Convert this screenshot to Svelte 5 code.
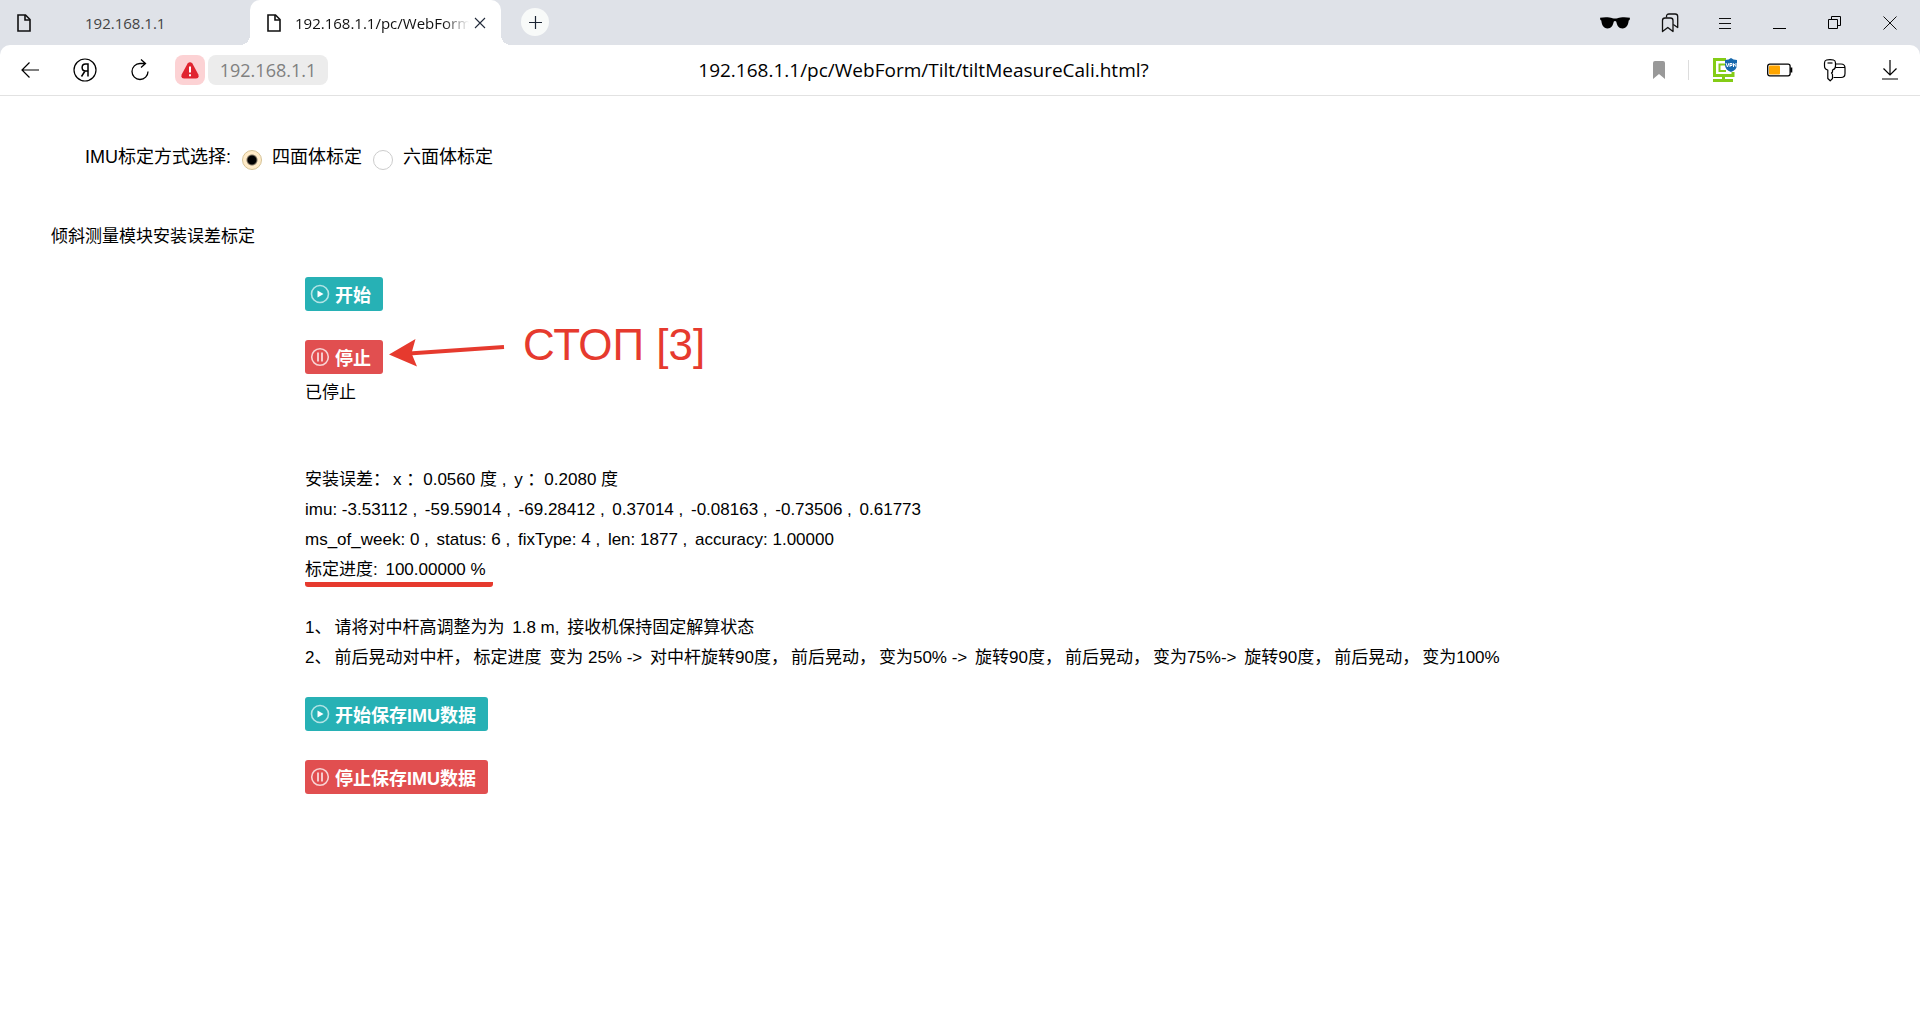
<script lang="ts">
    let tiltMode = $state('four');
    let status = $state('已停止');

    const address = '192.168.1.1';
    const path = '192.168.1.1/pc/WebForm/Tilt/tiltMeasureCali.html?';

    const installError = ['安装误差：', 'x ：0.0560 度 , ', 'y ：0.2080 度'];
    const imu = ['imu: -3.53112 , ', '-59.59014 , ', '-69.28412 , ', '0.37014 , ', '-0.08163 , ', '-0.73506 , ', '0.61773'];
    const solution = ['ms_of_week: 0 , ', 'status: 6 , ', 'fixType: 4 , ', 'len: 1877 , ', 'accuracy: 1.00000'];
    const progress = ['标定进度: ', '100.00000 %'];

    const steps = [
        ['1、', '请将对中杆高调整为为 ', '1.8 m, ', '接收机保持固定解算状态'],
        ['2、', '前后晃动对中杆，', '标定进度 ', '变为 25% -> ', '对中杆旋转90度，', '前后晃动，', '变为50% -> ', '旋转90度，', '前后晃动，', '变为75%-> ', '旋转90度，', '前后晃动，', '变为100%']
    ];
</script>

{#snippet pageIcon()}
    <svg class="page-icon" width="14" height="18" viewBox="0 0 14 18">
        <path d="M1 1H8.5L13 5.5V17H1Z" fill="none" stroke="currentColor" stroke-width="1.6" />
        <path d="M8 1V6H13" fill="none" stroke="currentColor" stroke-width="1.6" />
    </svg>
{/snippet}

{#snippet playIcon()}
    <svg width="20" height="20" viewBox="0 0 20 20">
        <circle cx="10" cy="10" r="8.5" fill="none" stroke="#fff" stroke-opacity="0.65" stroke-width="1.6" />
        <path d="M7.5 6.5L13.5 10L7.5 13.5Z" fill="#fff" />
    </svg>
{/snippet}

{#snippet pauseIcon()}
    <svg width="20" height="20" viewBox="0 0 20 20">
        <circle cx="10" cy="10" r="8.3" fill="none" stroke="#fff" stroke-opacity="0.75" stroke-width="1.6" />
        <path d="M8 5.5V14.5M12 5.5V14.5" stroke="#fff" stroke-opacity="0.7" stroke-width="2" />
    </svg>
{/snippet}

{#snippet reading(parts)}
    {#each parts as part}<span class="part">{part}</span>{/each}
{/snippet}

<header>
    <div class="tab-bar">
        <div class="tab">
            {@render pageIcon()}
            <span class="tab-title centered">{address}</span>
        </div>
        <div class="tab active">
            {@render pageIcon()}
            <span class="tab-title clipped">{path}</span>
            <button class="tab-close" aria-label="Close tab">
                <svg width="12" height="12" viewBox="0 0 12 12"><path d="M1 1L11 11M11 1L1 11" stroke="#222b3a" stroke-width="1.1" /></svg>
            </button>
        </div>
        <button class="new-tab" aria-label="New tab">
            <svg width="13" height="13" viewBox="0 0 13 13"><path d="M6.5 0V13M0 6.5H13" stroke="#1b2433" stroke-width="1.2" /></svg>
        </button>
        <div class="window-controls">
            <button class="tool" aria-label="Incognito">
                <svg width="30" height="12" viewBox="0 0 30 12">
                    <path d="M0 0.8C4 -0.1 9 -0.1 12.5 1.2C14 1.7 16 1.7 17.5 1.2C21 -0.1 26 -0.1 30 0.8L29.6 3L28.7 3.6C28.3 8 26.5 11.5 22.5 11.5C18.6 11.5 17 8.5 16.3 4.8C15.8 3.8 14.2 3.8 13.7 4.8C13 8.5 11.4 11.5 7.5 11.5C3.5 11.5 1.7 8 1.3 3.6L0.4 3Z" fill="#000" />
                </svg>
            </button>
            <button class="tool" aria-label="Bookmarks">
                <svg width="18" height="20" viewBox="0 0 18 20" fill="none" stroke="#111" stroke-width="1.3" stroke-linejoin="round">
                    <path d="M1.5 18.5V7.5Q1.5 5 4 5H9.5Q12 5 12 7.5V18.5L6.8 14.5Z" />
                    <path d="M5.5 4.5V3.5Q5.5 1 8 1H14.2Q16.7 1 16.7 3.5V14.5L12.3 11.5" />
                </svg>
            </button>
            <button class="tool" aria-label="Menu">
                <svg width="12" height="12" viewBox="0 0 12 12"><path d="M0 1H12M0 6H12M0 11H12" stroke="#111" stroke-width="1" shape-rendering="crispEdges" /></svg>
            </button>
            <button class="tool" aria-label="Minimize">
                <svg width="13" height="13" viewBox="0 0 13 13"><path d="M0 12.5H13" stroke="#000" stroke-width="1" /></svg>
            </button>
            <button class="tool" aria-label="Restore">
                <svg width="13" height="13" viewBox="0 0 13 13" fill="none" stroke="#000"><path d="M0.5 3.5H9.5V12.5H0.5ZM3.5 3.5V0.5H12.5V9.5H9.5" /></svg>
            </button>
            <button class="tool" aria-label="Close">
                <svg width="14" height="14" viewBox="0 0 14 14"><path d="M0.5 0.5L13.5 13.5M13.5 0.5L0.5 13.5" stroke="#111" /></svg>
            </button>
        </div>
    </div>

    <div class="toolbar-back">
        <nav class="toolbar">
            <button class="tool" aria-label="Back">
                <svg width="18" height="16" viewBox="0 0 18 16" fill="none" stroke="#000" stroke-width="1.2"><path d="M8.5 0.5L1 8L8.5 15.5M1 8H18" /></svg>
            </button>
            <button class="tool" aria-label="Yandex">
                <svg width="24" height="24" viewBox="0 0 24 24" fill="none" stroke="#000" stroke-width="1.2">
                    <circle cx="12" cy="12" r="11" />
                    <path d="M15 18.5V6H12.5C8 6 8 13 12.5 13H15M12 13L8.5 18.5" stroke-width="1.5" />
                </svg>
            </button>
            <button class="tool" aria-label="Reload">
                <svg width="18" height="22" viewBox="0 0 18 22" fill="none" stroke="#000" stroke-width="1.3"><path d="M17 12.5A8 8 0 1 1 9 4.5H14.5M10 0.5L14.5 4.5L10 8.5" /></svg>
            </button>
            <button class="warning" aria-label="Not secure">
                <svg width="18" height="17" viewBox="0 0 18 17">
                    <path d="M6.6 1.6Q9 -1.2 11.4 1.6L17.2 12.2Q18.6 16.2 15 16.6H3Q-0.6 16.2 0.8 12.2Z" fill="#e0242f" />
                    <path d="M9 4.6V10.4M9 12.2V14.2" stroke="#fff" stroke-width="2" />
                </svg>
            </button>
            <a class="host" href="#top">{address}</a>
            <div class="page-path">{path}</div>
            <button class="tool" aria-label="Add bookmark">
                <svg width="12" height="18" viewBox="0 0 12 18"><path d="M0 2Q0 0 2 0H10Q12 0 12 2V18L6 13L0 18Z" fill="#999" /></svg>
            </button>
            <span class="divider"></span>
            <button class="tool" aria-label="VPN">
                <svg width="26" height="26" viewBox="0 0 26 26">
                    <g fill="none" stroke="#84cc16" stroke-width="3">
                        <path d="M14 2.5H2.5V18.5H21V15" />
                        <path d="M13 7.5H7.5V14H14" stroke-width="2" />
                        <path d="M11.5 19V23M1 23.5H21" />
                    </g>
                    <path d="M13 3Q17 3 19 1Q21 3 25 3V8Q25 13 19 15Q13 13 13 8Z" fill="#1668ad" />
                    <path d="M14 6L15.5 10L17 6M18 10V6.5H20V8.5H18M21.5 10V6.5L24 9.5V6" fill="none" stroke="#fff" stroke-width="1" />
                </svg>
            </button>
            <button class="tool" aria-label="Battery">
                <svg width="26" height="14" viewBox="0 0 26 14">
                    <rect x="0.7" y="1.2" width="22.4" height="11.6" rx="2" fill="#fff" stroke="#000" stroke-width="1.3" />
                    <rect x="2" y="2.5" width="11" height="9" rx="1" fill="#ffa600" />
                    <path d="M24.3 4.5V9.5" stroke="#000" stroke-width="2" />
                </svg>
            </button>
            <button class="tool" aria-label="Passwords">
                <svg width="24" height="23" viewBox="0 0 24 23" fill="none" stroke="#000" stroke-width="1.2" stroke-linejoin="round">
                    <path d="M12.5 5H18Q22 5 22 9V14.5Q22 18.5 18 18.5H10.5M12.5 8.5H22" />
                    <path d="M3.5 1Q7 0.2 10.5 1Q12.5 1.5 12.5 4V7Q12.5 10.2 9.5 11V13L8.5 14L9.5 15.5V19.5L7.2 21.8L4.8 19.5V11Q1.5 10.2 1.5 7V4Q1.5 1.5 3.5 1Z" fill="#fff" />
                    <path d="M4.5 4H9.5" />
                </svg>
            </button>
            <button class="tool" aria-label="Downloads">
                <svg width="16" height="20" viewBox="0 0 16 20" fill="none" stroke="#000" stroke-width="1.2"><path d="M8 0V15M1.5 8.5L8 15L14.5 8.5M0 19H16" /></svg>
            </button>
        </nav>
    </div>
</header>

<main id="top">
    <fieldset class="mode">
        <legend>IMU标定方式选择:</legend>
        <label><input type="radio" name="tilt" value="four" bind:group={tiltMode} />四面体标定</label>
        <label><input type="radio" name="tilt" value="six" bind:group={tiltMode} />六面体标定</label>
    </fieldset>

    <h1>倾斜测量模块安装误差标定</h1>

    <section class="calibration">
        <button class="action start" onclick={() => (status = '标定中')}>{@render playIcon()}开始</button>

        <div class="stop-row">
            <button class="action stop" onclick={() => (status = '已停止')}>{@render pauseIcon()}停止</button>
            <div class="callout">
                <svg width="116" height="28" viewBox="0 0 116 28">
                    <path d="M20 14.5L115 8" stroke="#e63a2e" stroke-width="4" />
                    <path d="M0 15.5L26.5 0L22.5 14.3L28 27.5Z" fill="#e63a2e" />
                </svg>
                <span>СТОП [3]</span>
            </div>
        </div>
        <p class="status">{status}</p>

        <div class="readings">
            <p>{@render reading(installError)}</p>
            <p>{@render reading(imu)}</p>
            <p>{@render reading(solution)}</p>
            <p><span class="progress">{@render reading(progress)}</span></p>
        </div>

        <div class="steps">
            {#each steps as step}
                <p>{@render reading(step)}</p>
            {/each}
        </div>

        <button class="action start">{@render playIcon()}开始保存IMU数据</button>
        <button class="action stop">{@render pauseIcon()}停止保存IMU数据</button>
    </section>
</main>

<style>
    :global(body) {
        margin: 0;
        background: #fff;
        color: #000;
        font-family: "Liberation Sans", "Noto Sans CJK SC", sans-serif;
    }

    button {
        border: none;
        background: none;
        padding: 0;
        font-family: inherit;
        cursor: pointer;
    }

    header {
        font-family: "Open Sans", "Noto Sans", sans-serif;
    }

    .tab-bar {
        display: flex;
        height: 45px;
        background: #dfe2e8;
    }

    .tab {
        display: flex;
        align-items: center;
        box-sizing: border-box;
        width: 250px;
        padding: 0 17px;
        color: #444;
        font-size: 15px;
    }

        .tab.active {
            position: relative;
            width: 251px;
            padding: 0 15px 0 17px;
            border-radius: 10px 10px 0 0;
            background: #fff;
            color: #111;
        }

        /* outward curves where the active tab meets the toolbar */
        .tab.active::before,
        .tab.active::after {
            content: '';
            position: absolute;
            bottom: 0;
            width: 10px;
            height: 10px;
        }

        .tab.active::before {
            left: -10px;
            background: radial-gradient(circle at 0 0, transparent 10px, #fff 10px);
        }

        .tab.active::after {
            right: -10px;
            background: radial-gradient(circle at 100% 0, transparent 10px, #fff 10px);
        }

    .page-icon {
        flex: none;
        color: #111;
    }

    .tab-title {
        flex: 1;
        white-space: nowrap;
    }

    .centered {
        padding-left: 54px;
    }

    .clipped {
        margin: 0 5px 0 14px;
        overflow: hidden;
        mask-image: linear-gradient(to right, #000 85%, transparent);
    }

    .tab-close {
        display: flex;
    }

    .new-tab {
        display: flex;
        align-items: center;
        justify-content: center;
        width: 28px;
        height: 28px;
        margin: 8px 0 0 20px;
        border-radius: 50%;
        background: #f8faf9;
    }

    .window-controls {
        display: flex;
        margin-left: auto;
        padding-right: 3px;
    }

    .tool {
        display: flex;
        align-items: center;
        justify-content: center;
        flex: none;
        width: 55px;
    }

    .toolbar-back {
        background: #dfe2e8;
    }

    .toolbar {
        display: flex;
        align-items: center;
        height: 50px;
        padding: 0 3px 0 2px;
        border-bottom: 1px solid #e2e2e2;
        border-radius: 10px 10px 0 0;
        background: #fff;
    }

    .warning {
        display: flex;
        align-items: center;
        justify-content: center;
        width: 30px;
        height: 30px;
        margin: 0 3px 0 8px;
        border-radius: 8px;
        background: #fcd2d4;
    }

    .host {
        box-sizing: border-box;
        width: 120px;
        border-radius: 8px;
        background: #ececec;
        color: #808080;
        font-size: 18px;
        line-height: 30px;
        text-align: center;
        text-decoration: none;
    }

    .page-path {
        flex: 1;
        padding-right: 112px;
        font-size: 19px;
        text-align: center;
    }

    .divider {
        width: 1px;
        height: 20px;
        margin: 0 8px 0 2px;
        background: #ddd;
    }

    main {
        padding: 43px 51px;
        font-size: 17px;
    }

    .mode {
        display: flex;
        align-items: center;
        gap: 11px;
        margin: 0;
        padding: 0 34px;
        border: none;
        font-size: 18px;
        line-height: 36px;
    }

        .mode legend {
            float: left;
            padding: 0;
        }

        .mode label {
            display: flex;
            align-items: center;
            gap: 10px;
        }

        .mode input {
            appearance: none;
            box-sizing: border-box;
            width: 20px;
            height: 20px;
            margin: 6px 0 0;
            border: 1px solid #ccc;
            border-radius: 50%;
            background: #fff;
        }

        .mode input:checked {
            border-color: #d5c295;
            background: radial-gradient(circle, #000 4px, #ffebc8 6px);
        }

    h1 {
        margin: 47px 0 25px;
        font-size: 17px;
        font-weight: normal;
        line-height: 30px;
    }

    .calibration {
        display: flex;
        flex-direction: column;
        align-items: flex-start;
        padding-left: 254px;
    }

    .action {
        display: flex;
        align-items: center;
        gap: 5px;
        height: 34px;
        padding: 0 12px 0 5px;
        border-radius: 3px;
        color: #fff;
        font-size: 18px;
        font-weight: bold;
    }

    .start {
        margin-bottom: 29px;
        background: #27b1b5;
    }

    .stop {
        background: #e14f50;
    }

    .stop-row {
        position: relative;
    }

    .callout {
        position: absolute;
        top: -20px;
        left: 84px;
        display: flex;
        align-items: center;
        gap: 18px;
        color: #e63a2e;
        font-size: 44px;
        line-height: 50px;
        white-space: nowrap;
    }

        .callout svg {
            margin-top: 16px;
        }

    p {
        margin: 0;
        line-height: 30px;
    }

    .status {
        margin-top: 4px;
    }

    .readings {
        margin: 57px 0 26px;
    }

    .part {
        margin-right: 3px;
        white-space: pre-wrap;
    }

    .progress {
        display: inline-block;
        padding-right: 4px;
        border-bottom: 5px solid #e63a2e;
        border-radius: 3px;
        line-height: 24px;
    }

    .steps {
        margin-bottom: 24px;
    }
</style>
